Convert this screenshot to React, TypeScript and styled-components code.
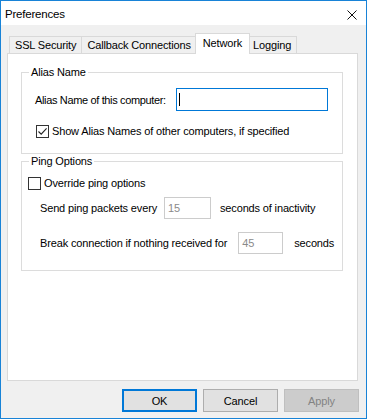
import * as React from "react";
import styled, { createGlobalStyle } from "styled-components";

const GlobalStyle = createGlobalStyle`
  html, body {
    margin: 0;
    padding: 0;
    background: #ffffff;
  }
  body {
    font-family: "Liberation Sans", Arial, sans-serif;
    font-size: 11px;
    letter-spacing: -0.15px;
    color: #000000;
  }
`;

const TABS = ["SSL Security", "Callback Connections", "Network", "Logging"];
const ACTIVE_TAB = "Network";

const App = () => (
  <>
    <GlobalStyle />
    <Window>
      <TitleBar>
        <Title>Preferences</Title>
        <CloseIcon viewBox="0 0 10 10" aria-label="Close">
          <path d="M0.5 0.5 L9.5 9.5 M9.5 0.5 L0.5 9.5" />
        </CloseIcon>
      </TitleBar>

      <Body>
        <TabStrip>
          {TABS.map((tab) => (
            <Tab key={tab} active={tab === ACTIVE_TAB}>
              {tab}
            </Tab>
          ))}
        </TabStrip>

        <Panel>
          <Group>
            <Legend>Alias Name</Legend>
            <AliasContent>
              <Row>
                <Label tight>Alias Name of this computer:</Label>
                <TextBox width={152} height={23} focused>
                  <Caret />
                </TextBox>
              </Row>
              <CheckRow indent={1}>
                <Checkbox>
                  <svg viewBox="0 0 11 11" width="11" height="11">
                    <path d="M1.5 5.5 L4.2 8.2 L9.6 2.4" />
                  </svg>
                </Checkbox>
                <Label>Show Alias Names of other computers, if specified</Label>
              </CheckRow>
            </AliasContent>
          </Group>

          <Group>
            <Legend>Ping Options</Legend>
            <PingContent>
              <CheckRow indent={0}>
                <Checkbox />
                <Label>Override ping options</Label>
              </CheckRow>
              <ParamRow top={7}>
                <Label>Send ping packets every</Label>
                <TextBox width={47} height={22} before={7} after={9}>
                  15
                </TextBox>
                <Label>seconds of inactivity</Label>
              </ParamRow>
              <ParamRow top={13}>
                <Label>Break connection if nothing received for</Label>
                <TextBox width={45} height={22} before={11} after={11}>
                  45
                </TextBox>
                <Label>seconds</Label>
              </ParamRow>
            </PingContent>
          </Group>
        </Panel>

        <ButtonRow>
          <Button variant="default">OK</Button>
          <Button>Cancel</Button>
          <Button variant="disabled">Apply</Button>
        </ButtonRow>
      </Body>
    </Window>
  </>
);

const Window = styled.div`
  box-sizing: border-box;
  width: 367px;
  height: 419px;
  border: 1px solid #1883d7;
  background: #f0f0f0;
  display: flex;
  flex-direction: column;
  overflow: hidden;
`;

const TitleBar = styled.div`
  height: 24px;
  flex: none;
  background: #ffffff;
  display: flex;
  align-items: center;
  justify-content: space-between;
  padding: 0 9px 0 4px;
`;

const Title = styled.span`
  font-size: 11.5px;
  letter-spacing: -0.2px;
  color: #000000;
  padding-top: 1px;
`;

const CloseIcon = styled.svg`
  width: 10px;
  height: 10px;
  margin-top: 3px;
  fill: none;
  stroke: #111111;
  stroke-width: 1;
`;

const Body = styled.div`
  flex: 1;
  display: flex;
  flex-direction: column;
  padding: 8px 7px 6px 6px;
`;

const TabStrip = styled.div`
  height: 20px;
  display: flex;
  align-items: flex-end;
  padding-left: 2px;
`;

const Tab = styled.div<{ active?: boolean }>`
  box-sizing: border-box;
  height: ${(p) => (p.active ? 21 : 17)}px;
  margin: ${(p) => (p.active ? "0 -2px -1px -2px" : "0 0 0 -1px")};
  padding: ${(p) => (p.active ? "2px 7px 0" : "1px 5px 0")};
  border: 1px solid #d9d9d9;
  border-bottom: none;
  background: ${(p) => (p.active ? "#ffffff" : "#f0f0f0")};
  position: relative;
  z-index: ${(p) => (p.active ? 1 : 0)};
  white-space: nowrap;
  line-height: 14px;

  &:first-child {
    margin-left: 0;
  }
`;

const Panel = styled.div`
  box-sizing: border-box;
  height: 328px;
  margin-right: 1px;
  border: 1px solid #d9d9d9;
  background: #ffffff;
  padding: 11px 14px 0 13px;
  display: flex;
  flex-direction: column;
`;

const Group = styled.fieldset`
  margin: 0;
  padding: 0;
  min-width: 0;
  border: 1px solid #dcdcdc;
`;

const Legend = styled.legend`
  margin-left: 7px;
  padding: 0 2px;
  line-height: 14px;
  font-size: 11px;
`;

const AliasContent = styled.div`
  display: flex;
  flex-direction: column;
  padding: 9px 0 15px 13px;
`;

const PingContent = styled.div`
  display: flex;
  flex-direction: column;
  padding: 8px 0 16px 6px;
`;

const Label = styled.span<{ tight?: boolean }>`
  white-space: nowrap;
  letter-spacing: ${(p) => (p.tight ? "-0.35px" : "inherit")};
`;

const Row = styled.div`
  display: flex;
  align-items: center;
  gap: 10px;
`;

const CheckRow = styled.div<{ indent: number }>`
  display: flex;
  align-items: center;
  gap: 3px;
  height: 14px;
  margin-top: 13px;
  margin-left: ${(p) => p.indent}px;

  &:first-child {
    margin-top: 0;
  }
`;

const ParamRow = styled.div<{ top: number }>`
  display: flex;
  align-items: center;
  margin-top: ${(p) => p.top}px;
  margin-left: 12px;
`;

const TextBox = styled.div<{
  width: number;
  height: number;
  focused?: boolean;
  before?: number;
  after?: number;
}>`
  box-sizing: border-box;
  width: ${(p) => p.width}px;
  height: ${(p) => p.height}px;
  margin: 0 ${(p) => p.after ?? 0}px 0 ${(p) => p.before ?? 0}px;
  border: 1px solid ${(p) => (p.focused ? "#0078d7" : "#cccccc")};
  background: #ffffff;
  color: #8a8a8a;
  display: flex;
  align-items: center;
  padding: 0 0 1px 3px;
`;

const Caret = styled.span`
  width: 1px;
  height: 13px;
  margin-left: -1px;
  background: #000000;
`;

const Checkbox = styled.span`
  box-sizing: border-box;
  width: 13px;
  height: 13px;
  flex: none;
  border: 1px solid #333333;
  background: #ffffff;
  display: flex;
  align-items: center;
  justify-content: center;

  svg {
    fill: none;
    stroke: #222222;
    stroke-width: 1.1;
  }
`;

const ButtonRow = styled.div`
  display: flex;
  justify-content: flex-end;
  gap: 6px;
  margin-top: 8px;
`;

const Button = styled.button<{ variant?: "default" | "disabled" }>`
  box-sizing: border-box;
  width: 75px;
  height: 23px;
  padding: 0;
  font-family: "Liberation Sans", Arial, sans-serif;
  font-size: 11px;
  letter-spacing: -0.1px;
  background: ${(p) => (p.variant === "disabled" ? "#cccccc" : "#e1e1e1")};
  color: ${(p) => (p.variant === "disabled" ? "#838383" : "#000000")};
  border: ${(p) =>
    p.variant === "default"
      ? "2px solid #0078d7"
      : p.variant === "disabled"
      ? "1px solid #bfbfbf"
      : "1px solid #adadad"};
`;

export default App;
